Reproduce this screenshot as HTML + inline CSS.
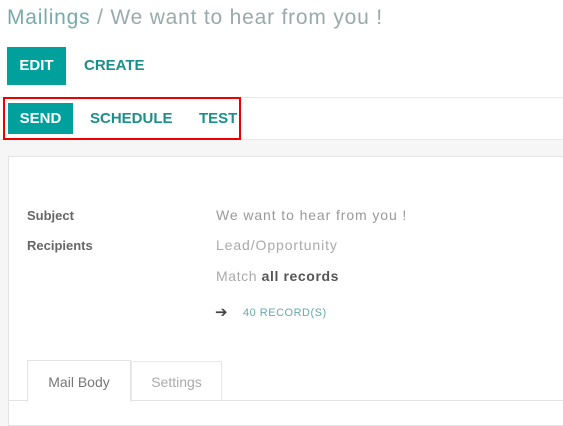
<!DOCTYPE html>
<html><head><style>
body{margin:0;width:563px;height:421px;overflow:hidden;background:#f6f6f6;font-family:"Liberation Sans",sans-serif;position:relative}
.a{position:absolute;white-space:nowrap}
</style></head><body>
<div class="a" style="left:0;top:0;width:563px;height:97px;background:#fff"></div>
<div class="a" style="left:7px;top:6px;font-size:21px;letter-spacing:0.8px;color:#9aa"><span style="color:#7aa">Mailings</span> / We want to hear from you !</div>
<div class="a" style="left:7px;top:47px;width:59px;height:38px;background:#00a09d;color:#fff;font-size:15px;font-weight:bold;line-height:38px;text-align:center">EDIT</div>
<div class="a" style="left:84px;top:57px;font-size:15px;font-weight:bold;color:#1a8f8c">CREATE</div>
<div class="a" style="left:0;top:97px;width:563px;height:43px;background:#fff;border-top:1px solid #e8e8e8;border-bottom:1px solid #e8e8e8;box-sizing:border-box"></div>
<div class="a" style="left:3px;top:97px;width:238px;height:43px;border:2px solid #e00;box-sizing:border-box"></div>
<div class="a" style="left:8px;top:103px;width:65px;height:31px;background:#00a09d;color:#fff;font-size:15px;font-weight:bold;line-height:31px;text-align:center">SEND</div>
<div class="a" style="left:90px;top:110px;font-size:15px;font-weight:bold;color:#1a8f8c">SCHEDULE</div>
<div class="a" style="left:199px;top:110px;font-size:15px;font-weight:bold;color:#1a8f8c">TEST</div>
<div class="a" style="left:8px;top:156px;width:560px;height:270px;background:#fff;border:1px solid #e4e4e4;box-sizing:border-box"></div>
<div class="a" style="left:27px;top:208px;font-size:13px;font-weight:bold;color:#666">Subject</div>
<div class="a" style="left:27px;top:238px;font-size:13px;font-weight:bold;color:#666">Recipients</div>
<div class="a" style="left:216px;top:207px;font-size:14px;letter-spacing:0.9px;color:#999">We want to hear from you !</div>
<div class="a" style="left:216px;top:237px;font-size:14px;letter-spacing:0.9px;color:#aaa">Lead/Opportunity</div>
<div class="a" style="left:216px;top:268px;font-size:14px;letter-spacing:0.6px;color:#aaa">Match <b style="color:#555">all records</b></div>
<div class="a" style="left:215px;top:303px;font-size:15px;color:#444">➔</div>
<div class="a" style="left:243px;top:307px;font-size:11px;letter-spacing:0.5px;color:#6aa">40 RECORD(S)</div>
<div class="a" style="left:8px;top:400px;width:560px;height:1px;background:#e4e4e4"></div>
<div class="a" style="left:27px;top:360px;width:104px;height:42px;background:#fff;border:1px solid #e4e4e4;border-bottom:none;box-sizing:border-box;font-size:14px;color:#777;line-height:42px;text-align:center">Mail Body</div>
<div class="a" style="left:131px;top:361px;width:91px;height:39px;border:1px solid #e8e8e8;border-bottom:none;box-sizing:border-box;font-size:14px;color:#aaa;line-height:40px;text-align:center">Settings</div>
</body></html>
